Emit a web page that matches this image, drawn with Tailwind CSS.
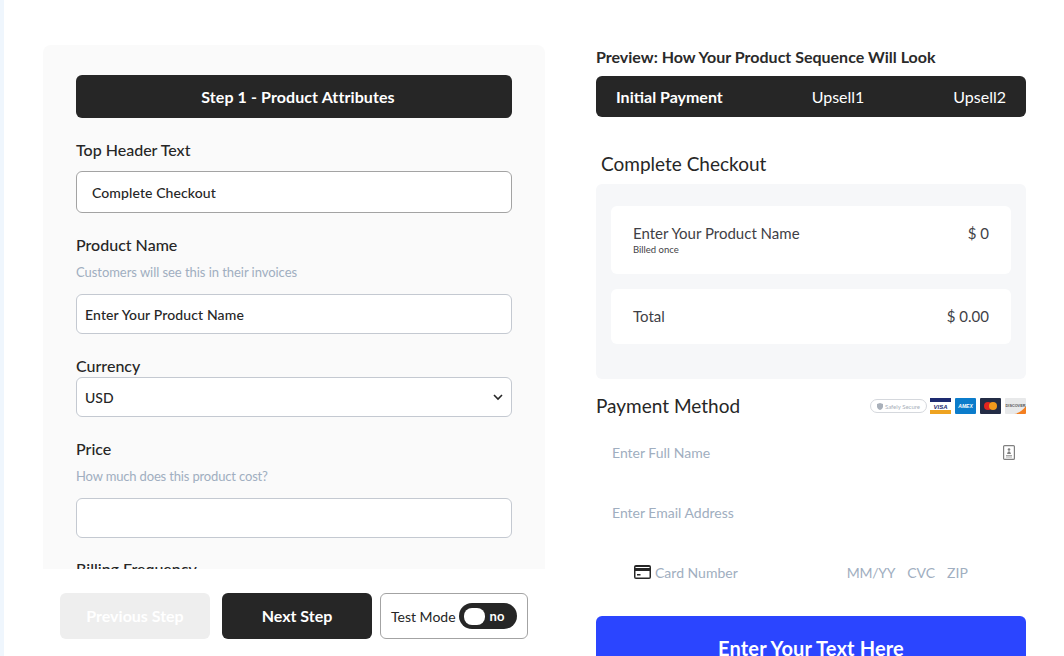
<!DOCTYPE html>
<html lang="en">
<head>
<meta charset="utf-8">
<title>Product Attributes</title>
<script src="https://cdn.jsdelivr.net/npm/@tailwindcss/browser@4"></script>
</head>
<body class="bg-white font-['Lato',sans-serif] text-[#262626]">
<div class="flex h-[656px] w-[1064px] overflow-hidden">
    <!-- edge strip -->
    <div class="w-[4px] shrink-0 bg-[#eff6fd]"></div>

    <!-- Left: step form -->
    <div class="ml-[39px] mt-[45px] flex h-[611px] w-[502px] shrink-0 flex-col">
        <div class="h-[524px] shrink-0 overflow-hidden rounded-t-lg bg-[#fafafa] px-[33px] pt-[30px]">
            <div class="flex h-[43px] items-center justify-center rounded-md bg-[#262626] pl-[8px] text-[16px] font-bold tracking-[0.1px] text-white">Step 1 - Product Attributes</div>

            <div class="mt-[22px] h-[20px] text-[16px] font-medium leading-[20px]">Top Header Text</div>
            <div class="mt-[11px] flex h-[42px] items-center rounded-md border border-[#a3a3a3] bg-white pl-[15px] text-[14px] font-medium tracking-[0.1px]">Complete Checkout</div>

            <div class="mt-[22px] h-[20px] text-[16px] font-medium leading-[20px]">Product Name</div>
            <div class="mt-[7px] h-[20px] text-[13px] tracking-[-0.05px] leading-[20px] text-[#a0aec0]">Customers will see this in their invoices</div>
            <div class="mt-[12px] flex h-[40px] items-center rounded-md border border-[#c4c9d1] bg-white pl-[8px] text-[14px] font-medium tracking-[0.13px]">Enter Your Product Name</div>

            <div class="mt-[22px] h-[20px] text-[16px] font-medium leading-[20px]">Currency</div>
            <div class="mt-[1px] flex h-[40px] items-center justify-between rounded-md border border-[#c4c9d1] bg-white pl-[8px] pr-[8px] text-[14px] font-medium">
                <span>USD</span>
                <svg width="10" height="7" viewBox="0 0 10 7" fill="none" stroke="#262626" stroke-width="1.6"><path d="M1 1l4 4 4-4"/></svg>
            </div>

            <div class="mt-[22px] h-[20px] text-[16px] font-medium leading-[20px]">Price</div>
            <div class="mt-[7px] h-[20px] text-[13px] tracking-[-0.16px] leading-[20px] text-[#a0aec0]">How much does this product cost?</div>
            <div class="mt-[12px] h-[40px] rounded-md border border-[#c4c9d1] bg-white"></div>

            <div class="mt-[21px] h-[20px] text-[16px] font-medium leading-[20px]">Billing Frequency</div>
        </div>
        <div class="flex h-[87px] shrink-0 items-start bg-white pl-[17px] pt-[24px]">
            <div class="flex h-[46px] w-[150px] items-center justify-center rounded-md bg-[#eeeeee] text-[16px] font-bold text-white">Previous Step</div>
            <div class="ml-[12px] flex h-[46px] w-[150px] items-center justify-center rounded-md bg-[#262626] text-[16px] font-bold text-white">Next Step</div>
            <div class="ml-[8px] flex h-[46px] w-[148px] items-center rounded-md border border-[#a3a3a3] pl-[10px] text-[14px]">
                <span>Test Mode</span>
                <div class="ml-[3px] flex h-[26px] w-[58px] items-center rounded-full bg-[#262626] pl-[5px]">
                    <div class="h-[17px] w-[21px] rounded-[8px] bg-white"></div>
                    <span class="ml-[5px] text-[13px] font-bold leading-none text-white">no</span>
                </div>
            </div>
        </div>
    </div>

    <!-- Right: preview -->
    <div class="ml-[51px] w-[430px] shrink-0 pt-[47px]">
        <div class="h-[20px] text-[16px] font-bold leading-[20px] text-[#2a2a2a]">Preview: How Your Product Sequence Will Look</div>
        <div class="mt-[9px] flex h-[41px] items-center justify-between rounded-md bg-[#262626] pl-[20px] pr-[20px] text-[16px] text-white">
            <span class="font-bold">Initial Payment</span>
            <span>Upsell1</span>
            <span>Upsell2</span>
        </div>

        <div class="ml-[5px] mt-[34px] h-[26px] text-[19px] leading-[26px]">Complete Checkout</div>
        <div class="mt-[7px] h-[195px] rounded-md bg-[#f6f7f9] px-[15px] pt-[22px]">
            <div class="flex h-[68px] justify-between rounded-md bg-white pl-[22px] pr-[22px] pt-[17px] text-[15px] text-[#3f3f46]">
                <div>
                    <div class="h-[20px] leading-[20px]">Enter Your Product Name</div>
                    <div class="mt-[1px] h-[12px] text-[9.5px] leading-[12px]">Billed once</div>
                </div>
                <div class="h-[20px] leading-[20px]">$ 0</div>
            </div>
            <div class="mt-[15px] flex h-[55px] items-center justify-between rounded-md bg-white pl-[22px] pr-[22px] text-[15px] text-[#3f3f46]">
                <span>Total</span>
                <span>$ 0.00</span>
            </div>
        </div>

        <div class="mt-[14px] flex h-[26px] items-center justify-between">
            <span class="text-[19px] leading-[26px]">Payment Method</span>
            <div class="flex items-center gap-[4px]">
                <div class="mr-[-1px] flex h-[14px] w-[57px] items-center justify-center gap-[2px] rounded-full border border-[#d5d8dd] text-[6px] text-[#a9b0ba]">
                    <svg width="6" height="7" viewBox="0 0 6 7"><path d="M3 0l3 1v2.5C6 5.2 4.500 6.500 3 7 1.500 6.500 0 5.200 0 3.500V1z" fill="#a9b0ba"/></svg>
                    <span>Safely Secure</span>
                </div>
                <svg width="21" height="16" viewBox="0 0 21 16"><rect width="21" height="16" rx="1" fill="#fff"/><rect width="21" height="4" fill="#1d2a70"/><rect y="12" width="21" height="4" fill="#eea321"/><text x="10.500" y="10.500" text-anchor="middle" font-size="6" font-weight="900" font-style="italic" fill="#1d2a70" font-family="Liberation Sans">VISA</text></svg>
                <svg width="21" height="16" viewBox="0 0 21 16"><rect width="21" height="16" rx="1" fill="#0b7ccb"/><text x="10.500" y="10" text-anchor="middle" font-size="5" font-weight="700" font-style="italic" fill="#fff" font-family="Liberation Sans">AMEX</text></svg>
                <svg width="21" height="16" viewBox="0 0 21 16"><rect width="21" height="16" rx="1" fill="#232c45"/><circle cx="8" cy="8" r="4" fill="#e3251f"/><circle cx="13" cy="8" r="4" fill="#f29a1c"/></svg>
                <svg width="21" height="16" viewBox="0 0 21 16"><rect width="21" height="16" rx="1" fill="#e8e9ea"/><path d="M21 8v7a1 1 0 0 1-1 1H9c6-1 9-4 12-8z" fill="#f47f20"/><text x="10.500" y="9" text-anchor="middle" font-size="3.800" font-weight="700" fill="#555" font-family="Liberation Sans">DISCOVER</text></svg>
            </div>
        </div>

        <div class="mt-[21px] flex h-[24px] items-center justify-between pl-[16px] pr-[11px] text-[14px] text-[#a0aec0]">
            <span>Enter Full Name</span>
            <svg width="12" height="15" viewBox="0 0 12 15" fill="none"><rect x="0.600" y="0.600" width="10.800" height="13.800" rx="1" stroke="#808080" stroke-width="1.200"/><circle cx="6" cy="4.500" r="1.300" fill="#808080"/><path d="M4 9l1-2.500h2L8 9z" fill="#808080"/><path d="M3 10.500h6M3 12h6" stroke="#a8a8a8"/></svg>
        </div>
        <div class="mt-[36px] flex h-[24px] items-center pl-[16px] text-[14px] text-[#a0aec0]">Enter Email Address</div>
        <div class="mt-[36px] flex h-[24px] items-center pl-[38px] text-[14px] text-[#a0aec0]">
            <svg class="mr-[4px]" width="17" height="14" viewBox="0 0 17 14"><rect width="17" height="14" rx="2" fill="#262626"/><rect x="1.500" y="2" width="14" height="1" fill="#fff"/><rect x="1.500" y="6" width="14" height="6.500" fill="#fff"/><rect x="3" y="9" width="3.500" height="1.500" fill="#262626"/></svg>
            <span>Card Number</span>
            <span class="ml-[109px] tracking-[-0.3px]">MM/YY</span>
            <span class="ml-[12px]">CVC</span>
            <span class="ml-[12px]">ZIP</span>
        </div>

        <div class="mt-[32px] flex h-[64px] items-center justify-center rounded-md bg-[#2b45ff] text-[20px] font-bold tracking-[0.15px] text-white">Enter Your Text Here</div>
    </div>
</div>
</body>
</html>
